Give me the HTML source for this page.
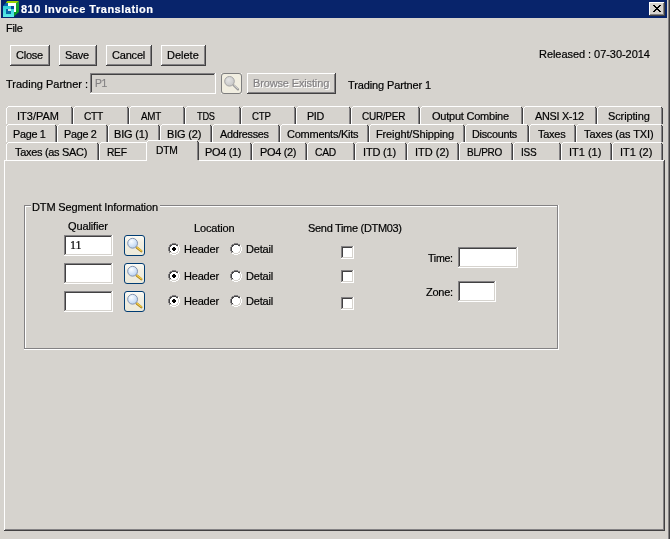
<!DOCTYPE html>
<html><head><meta charset="utf-8"><title>810 Invoice Translation</title>
<style>
html,body{margin:0;padding:0}
body{width:670px;height:539px;background:#d6d3ce;position:relative;overflow:hidden;font-family:"Liberation Sans",sans-serif;font-size:11px;line-height:13px;color:#000}
.a{position:absolute}
.t{position:absolute;white-space:nowrap;height:13px;-webkit-text-stroke:0.2px currentColor}
</style></head>
<body>
<div class="a" style="left:1px;top:0px;width:666px;height:18px;background:#08246b;"></div>
<div class="a" style="left:668px;top:0px;width:1px;height:539px;background:#848284;"></div>
<div class="a" style="left:669px;top:0px;width:1px;height:539px;background:#424142;"></div>
<div class="a" style="left:649px;top:2px;width:16px;height:14px;background:#d6d3ce;"></div>
<div class="a" style="left:649px;top:2px;width:15px;height:1px;background:#ffffff;"></div>
<div class="a" style="left:649px;top:2px;width:1px;height:13px;background:#ffffff;"></div>
<div class="a" style="left:649px;top:15px;width:16px;height:1px;background:#424142;"></div>
<div class="a" style="left:664px;top:2px;width:1px;height:14px;background:#424142;"></div>
<div class="a" style="left:650px;top:14px;width:14px;height:1px;background:#848284;"></div>
<div class="a" style="left:663px;top:3px;width:1px;height:12px;background:#848284;"></div>
<svg class="a" style="left:653px;top:5px" width="8" height="7" viewBox="0 0 8 7" shape-rendering="crispEdges"><path fill="#000" d="M0 0h2v1h-2zM6 0h2v1h-2zM1 1h2v1h-2zM5 1h2v1h-2zM2 2h4v1h-4zM3 3h2v1h-2zM2 4h4v1h-4zM1 5h2v1h-2zM5 5h2v1h-2zM0 6h2v1h-2zM6 6h2v1h-2z"/></svg>
<svg class="a" style="left:3px;top:1px" width="16" height="16" viewBox="0 0 16 16">
<defs><linearGradient id="cy" x1="0" y1="0" x2="0" y2="1"><stop offset="0" stop-color="#30ccd4"/><stop offset="1" stop-color="#5cece8"/></linearGradient>
<linearGradient id="gr" x1="0" y1="0" x2="0" y2="1"><stop offset="0" stop-color="#20a838"/><stop offset="1" stop-color="#089820"/></linearGradient></defs>
<polygon points="4.2,0 16,0 14,2 2.8,2" fill="#9cd400"/>
<polygon points="13,2 14,2 16,0 16,11 11,15.2 11,11 13,11" fill="url(#gr)"/>
<polygon points="2.8,2 5,2 5,5 0,5" fill="#0868b0"/>
<rect x="5" y="2" width="8" height="9" fill="#ffffff"/>
<rect x="0" y="5" width="11" height="11" fill="url(#cy)"/>
<rect x="8" y="5" width="3" height="3" fill="#08509c"/>
<rect x="3" y="8" width="5" height="5" fill="#0868a8"/>
<rect x="5" y="8.2" width="3" height="1.6" fill="#ffffff"/>
</svg>
<div class="a" style="left:10px;top:45px;width:40px;height:21px;background:#d6d3ce;"></div>
<div class="a" style="left:10px;top:45px;width:39px;height:1px;background:#ffffff;"></div>
<div class="a" style="left:10px;top:45px;width:1px;height:20px;background:#ffffff;"></div>
<div class="a" style="left:10px;top:65px;width:40px;height:1px;background:#424142;"></div>
<div class="a" style="left:49px;top:45px;width:1px;height:21px;background:#424142;"></div>
<div class="a" style="left:11px;top:64px;width:38px;height:1px;background:#848284;"></div>
<div class="a" style="left:48px;top:46px;width:1px;height:19px;background:#848284;"></div>
<div class="a" style="left:59px;top:45px;width:38px;height:21px;background:#d6d3ce;"></div>
<div class="a" style="left:59px;top:45px;width:37px;height:1px;background:#ffffff;"></div>
<div class="a" style="left:59px;top:45px;width:1px;height:20px;background:#ffffff;"></div>
<div class="a" style="left:59px;top:65px;width:38px;height:1px;background:#424142;"></div>
<div class="a" style="left:96px;top:45px;width:1px;height:21px;background:#424142;"></div>
<div class="a" style="left:60px;top:64px;width:36px;height:1px;background:#848284;"></div>
<div class="a" style="left:95px;top:46px;width:1px;height:19px;background:#848284;"></div>
<div class="a" style="left:106px;top:45px;width:46px;height:21px;background:#d6d3ce;"></div>
<div class="a" style="left:106px;top:45px;width:45px;height:1px;background:#ffffff;"></div>
<div class="a" style="left:106px;top:45px;width:1px;height:20px;background:#ffffff;"></div>
<div class="a" style="left:106px;top:65px;width:46px;height:1px;background:#424142;"></div>
<div class="a" style="left:151px;top:45px;width:1px;height:21px;background:#424142;"></div>
<div class="a" style="left:107px;top:64px;width:44px;height:1px;background:#848284;"></div>
<div class="a" style="left:150px;top:46px;width:1px;height:19px;background:#848284;"></div>
<div class="a" style="left:161px;top:45px;width:45px;height:21px;background:#d6d3ce;"></div>
<div class="a" style="left:161px;top:45px;width:44px;height:1px;background:#ffffff;"></div>
<div class="a" style="left:161px;top:45px;width:1px;height:20px;background:#ffffff;"></div>
<div class="a" style="left:161px;top:65px;width:45px;height:1px;background:#424142;"></div>
<div class="a" style="left:205px;top:45px;width:1px;height:21px;background:#424142;"></div>
<div class="a" style="left:162px;top:64px;width:43px;height:1px;background:#848284;"></div>
<div class="a" style="left:204px;top:46px;width:1px;height:19px;background:#848284;"></div>
<div class="a" style="left:90px;top:73px;width:126px;height:21px;background:#d6d3ce;"></div>
<div class="a" style="left:90px;top:73px;width:125px;height:1px;background:#848284;"></div>
<div class="a" style="left:90px;top:73px;width:1px;height:20px;background:#848284;"></div>
<div class="a" style="left:91px;top:74px;width:123px;height:1px;background:#424142;"></div>
<div class="a" style="left:91px;top:74px;width:1px;height:18px;background:#424142;"></div>
<div class="a" style="left:90px;top:93px;width:126px;height:1px;background:#ffffff;"></div>
<div class="a" style="left:215px;top:73px;width:1px;height:21px;background:#ffffff;"></div>
<div class="a" style="left:91px;top:92px;width:124px;height:1px;background:#d6d3ce;"></div>
<div class="a" style="left:214px;top:74px;width:1px;height:19px;background:#d6d3ce;"></div>
<svg class="a" style="left:0;top:0" width="0" height="0"><defs><radialGradient id="lg1" cx="0.38" cy="0.32" r="0.75"><stop offset="0" stop-color="#fafdff"/><stop offset="0.45" stop-color="#dceafa"/><stop offset="1" stop-color="#b4cef0"/></radialGradient><radialGradient id="lg0" cx="0.4" cy="0.35" r="0.75"><stop offset="0" stop-color="#e4e4e4"/><stop offset="1" stop-color="#c4c4c4"/></radialGradient></defs></svg>
<div class="a" style="left:221px;top:73px;width:19px;height:19px;border:1px solid #7e7e7e;border-radius:3px;background:#f1eee1"></div>
<div class="a" style="left:221px;top:73px;width:1px;height:1px;background:#f4f3ee;"></div>
<div class="a" style="left:241px;top:73px;width:1px;height:1px;background:#f4f3ee;"></div>
<div class="a" style="left:221px;top:93px;width:1px;height:1px;background:#f4f3ee;"></div>
<div class="a" style="left:241px;top:93px;width:1px;height:1px;background:#f4f3ee;"></div>
<svg class="a" style="left:221px;top:73px" width="21" height="21" viewBox="0 0 21 21"><line x1="12.6" y1="12.3" x2="17" y2="16.4" stroke="#9c9c9c" stroke-width="2.2" stroke-linecap="round"/><line x1="12.9" y1="12.1" x2="17" y2="15.9" stroke="#dcdcdc" stroke-width="0.8"/><circle cx="8.5" cy="8.3" r="4.8" fill="url(#lg0)" stroke="#a4a4a4" stroke-width="1"/></svg>
<div class="a" style="left:247px;top:73px;width:89px;height:21px;background:#d6d3ce;"></div>
<div class="a" style="left:247px;top:73px;width:88px;height:1px;background:#ffffff;"></div>
<div class="a" style="left:247px;top:73px;width:1px;height:20px;background:#ffffff;"></div>
<div class="a" style="left:247px;top:93px;width:89px;height:1px;background:#424142;"></div>
<div class="a" style="left:335px;top:73px;width:1px;height:21px;background:#424142;"></div>
<div class="a" style="left:248px;top:92px;width:87px;height:1px;background:#848284;"></div>
<div class="a" style="left:334px;top:74px;width:1px;height:19px;background:#848284;"></div>
<div class="a" style="left:4px;top:160px;width:660px;height:1px;background:#ffffff;"></div>
<div class="a" style="left:4px;top:160px;width:1px;height:370px;background:#ffffff;"></div>
<div class="a" style="left:4px;top:530px;width:661px;height:1px;background:#424142;"></div>
<div class="a" style="left:664px;top:160px;width:1px;height:371px;background:#424142;"></div>
<div class="a" style="left:5px;top:529px;width:659px;height:1px;background:#848284;"></div>
<div class="a" style="left:663px;top:161px;width:1px;height:369px;background:#848284;"></div>
<div class="a" style="left:6px;top:108px;width:1px;height:16px;background:#ffffff;"></div>
<div class="a" style="left:7px;top:107px;width:1px;height:1px;background:#ffffff;"></div>
<div class="a" style="left:8px;top:106px;width:63px;height:1px;background:#ffffff;"></div>
<div class="a" style="left:71px;top:107px;width:1px;height:1px;background:#424142;"></div>
<div class="a" style="left:72px;top:108px;width:1px;height:16px;background:#424142;"></div>
<div class="a" style="left:71px;top:108px;width:1px;height:16px;background:#848284;"></div>
<div class="a" style="left:73px;top:108px;width:1px;height:16px;background:#ffffff;"></div>
<div class="a" style="left:74px;top:107px;width:1px;height:1px;background:#ffffff;"></div>
<div class="a" style="left:75px;top:106px;width:52px;height:1px;background:#ffffff;"></div>
<div class="a" style="left:127px;top:107px;width:1px;height:1px;background:#424142;"></div>
<div class="a" style="left:128px;top:108px;width:1px;height:16px;background:#424142;"></div>
<div class="a" style="left:127px;top:108px;width:1px;height:16px;background:#848284;"></div>
<div class="a" style="left:129px;top:108px;width:1px;height:16px;background:#ffffff;"></div>
<div class="a" style="left:130px;top:107px;width:1px;height:1px;background:#ffffff;"></div>
<div class="a" style="left:131px;top:106px;width:52px;height:1px;background:#ffffff;"></div>
<div class="a" style="left:183px;top:107px;width:1px;height:1px;background:#424142;"></div>
<div class="a" style="left:184px;top:108px;width:1px;height:16px;background:#424142;"></div>
<div class="a" style="left:183px;top:108px;width:1px;height:16px;background:#848284;"></div>
<div class="a" style="left:185px;top:108px;width:1px;height:16px;background:#ffffff;"></div>
<div class="a" style="left:186px;top:107px;width:1px;height:1px;background:#ffffff;"></div>
<div class="a" style="left:187px;top:106px;width:52px;height:1px;background:#ffffff;"></div>
<div class="a" style="left:239px;top:107px;width:1px;height:1px;background:#424142;"></div>
<div class="a" style="left:240px;top:108px;width:1px;height:16px;background:#424142;"></div>
<div class="a" style="left:239px;top:108px;width:1px;height:16px;background:#848284;"></div>
<div class="a" style="left:241px;top:108px;width:1px;height:16px;background:#ffffff;"></div>
<div class="a" style="left:242px;top:107px;width:1px;height:1px;background:#ffffff;"></div>
<div class="a" style="left:243px;top:106px;width:51px;height:1px;background:#ffffff;"></div>
<div class="a" style="left:294px;top:107px;width:1px;height:1px;background:#424142;"></div>
<div class="a" style="left:295px;top:108px;width:1px;height:16px;background:#424142;"></div>
<div class="a" style="left:294px;top:108px;width:1px;height:16px;background:#848284;"></div>
<div class="a" style="left:296px;top:108px;width:1px;height:16px;background:#ffffff;"></div>
<div class="a" style="left:297px;top:107px;width:1px;height:1px;background:#ffffff;"></div>
<div class="a" style="left:298px;top:106px;width:51px;height:1px;background:#ffffff;"></div>
<div class="a" style="left:349px;top:107px;width:1px;height:1px;background:#424142;"></div>
<div class="a" style="left:350px;top:108px;width:1px;height:16px;background:#424142;"></div>
<div class="a" style="left:349px;top:108px;width:1px;height:16px;background:#848284;"></div>
<div class="a" style="left:351px;top:108px;width:1px;height:16px;background:#ffffff;"></div>
<div class="a" style="left:352px;top:107px;width:1px;height:1px;background:#ffffff;"></div>
<div class="a" style="left:353px;top:106px;width:65px;height:1px;background:#ffffff;"></div>
<div class="a" style="left:418px;top:107px;width:1px;height:1px;background:#424142;"></div>
<div class="a" style="left:419px;top:108px;width:1px;height:16px;background:#424142;"></div>
<div class="a" style="left:418px;top:108px;width:1px;height:16px;background:#848284;"></div>
<div class="a" style="left:420px;top:108px;width:1px;height:16px;background:#ffffff;"></div>
<div class="a" style="left:421px;top:107px;width:1px;height:1px;background:#ffffff;"></div>
<div class="a" style="left:422px;top:106px;width:99px;height:1px;background:#ffffff;"></div>
<div class="a" style="left:521px;top:107px;width:1px;height:1px;background:#424142;"></div>
<div class="a" style="left:522px;top:108px;width:1px;height:16px;background:#424142;"></div>
<div class="a" style="left:521px;top:108px;width:1px;height:16px;background:#848284;"></div>
<div class="a" style="left:523px;top:108px;width:1px;height:16px;background:#ffffff;"></div>
<div class="a" style="left:524px;top:107px;width:1px;height:1px;background:#ffffff;"></div>
<div class="a" style="left:525px;top:106px;width:70px;height:1px;background:#ffffff;"></div>
<div class="a" style="left:595px;top:107px;width:1px;height:1px;background:#424142;"></div>
<div class="a" style="left:596px;top:108px;width:1px;height:16px;background:#424142;"></div>
<div class="a" style="left:595px;top:108px;width:1px;height:16px;background:#848284;"></div>
<div class="a" style="left:597px;top:108px;width:1px;height:16px;background:#ffffff;"></div>
<div class="a" style="left:598px;top:107px;width:1px;height:1px;background:#ffffff;"></div>
<div class="a" style="left:599px;top:106px;width:62px;height:1px;background:#ffffff;"></div>
<div class="a" style="left:661px;top:107px;width:1px;height:1px;background:#424142;"></div>
<div class="a" style="left:662px;top:108px;width:1px;height:16px;background:#424142;"></div>
<div class="a" style="left:661px;top:108px;width:1px;height:16px;background:#848284;"></div>
<div class="a" style="left:6px;top:126px;width:1px;height:16px;background:#ffffff;"></div>
<div class="a" style="left:7px;top:125px;width:1px;height:1px;background:#ffffff;"></div>
<div class="a" style="left:8px;top:124px;width:47px;height:1px;background:#ffffff;"></div>
<div class="a" style="left:55px;top:125px;width:1px;height:1px;background:#424142;"></div>
<div class="a" style="left:56px;top:126px;width:1px;height:16px;background:#424142;"></div>
<div class="a" style="left:55px;top:126px;width:1px;height:16px;background:#848284;"></div>
<div class="a" style="left:57px;top:126px;width:1px;height:16px;background:#ffffff;"></div>
<div class="a" style="left:58px;top:125px;width:1px;height:1px;background:#ffffff;"></div>
<div class="a" style="left:59px;top:124px;width:47px;height:1px;background:#ffffff;"></div>
<div class="a" style="left:106px;top:125px;width:1px;height:1px;background:#424142;"></div>
<div class="a" style="left:107px;top:126px;width:1px;height:16px;background:#424142;"></div>
<div class="a" style="left:106px;top:126px;width:1px;height:16px;background:#848284;"></div>
<div class="a" style="left:108px;top:126px;width:1px;height:16px;background:#ffffff;"></div>
<div class="a" style="left:109px;top:125px;width:1px;height:1px;background:#ffffff;"></div>
<div class="a" style="left:110px;top:124px;width:48px;height:1px;background:#ffffff;"></div>
<div class="a" style="left:158px;top:125px;width:1px;height:1px;background:#424142;"></div>
<div class="a" style="left:159px;top:126px;width:1px;height:16px;background:#424142;"></div>
<div class="a" style="left:158px;top:126px;width:1px;height:16px;background:#848284;"></div>
<div class="a" style="left:160px;top:126px;width:1px;height:16px;background:#ffffff;"></div>
<div class="a" style="left:161px;top:125px;width:1px;height:1px;background:#ffffff;"></div>
<div class="a" style="left:162px;top:124px;width:48px;height:1px;background:#ffffff;"></div>
<div class="a" style="left:210px;top:125px;width:1px;height:1px;background:#424142;"></div>
<div class="a" style="left:211px;top:126px;width:1px;height:16px;background:#424142;"></div>
<div class="a" style="left:210px;top:126px;width:1px;height:16px;background:#848284;"></div>
<div class="a" style="left:212px;top:126px;width:1px;height:16px;background:#ffffff;"></div>
<div class="a" style="left:213px;top:125px;width:1px;height:1px;background:#ffffff;"></div>
<div class="a" style="left:214px;top:124px;width:64px;height:1px;background:#ffffff;"></div>
<div class="a" style="left:278px;top:125px;width:1px;height:1px;background:#424142;"></div>
<div class="a" style="left:279px;top:126px;width:1px;height:16px;background:#424142;"></div>
<div class="a" style="left:278px;top:126px;width:1px;height:16px;background:#848284;"></div>
<div class="a" style="left:280px;top:126px;width:1px;height:16px;background:#ffffff;"></div>
<div class="a" style="left:281px;top:125px;width:1px;height:1px;background:#ffffff;"></div>
<div class="a" style="left:282px;top:124px;width:85px;height:1px;background:#ffffff;"></div>
<div class="a" style="left:367px;top:125px;width:1px;height:1px;background:#424142;"></div>
<div class="a" style="left:368px;top:126px;width:1px;height:16px;background:#424142;"></div>
<div class="a" style="left:367px;top:126px;width:1px;height:16px;background:#848284;"></div>
<div class="a" style="left:369px;top:126px;width:1px;height:16px;background:#ffffff;"></div>
<div class="a" style="left:370px;top:125px;width:1px;height:1px;background:#ffffff;"></div>
<div class="a" style="left:371px;top:124px;width:92px;height:1px;background:#ffffff;"></div>
<div class="a" style="left:463px;top:125px;width:1px;height:1px;background:#424142;"></div>
<div class="a" style="left:464px;top:126px;width:1px;height:16px;background:#424142;"></div>
<div class="a" style="left:463px;top:126px;width:1px;height:16px;background:#848284;"></div>
<div class="a" style="left:465px;top:126px;width:1px;height:16px;background:#ffffff;"></div>
<div class="a" style="left:466px;top:125px;width:1px;height:1px;background:#ffffff;"></div>
<div class="a" style="left:467px;top:124px;width:60px;height:1px;background:#ffffff;"></div>
<div class="a" style="left:527px;top:125px;width:1px;height:1px;background:#424142;"></div>
<div class="a" style="left:528px;top:126px;width:1px;height:16px;background:#424142;"></div>
<div class="a" style="left:527px;top:126px;width:1px;height:16px;background:#848284;"></div>
<div class="a" style="left:529px;top:126px;width:1px;height:16px;background:#ffffff;"></div>
<div class="a" style="left:530px;top:125px;width:1px;height:1px;background:#ffffff;"></div>
<div class="a" style="left:531px;top:124px;width:43px;height:1px;background:#ffffff;"></div>
<div class="a" style="left:574px;top:125px;width:1px;height:1px;background:#424142;"></div>
<div class="a" style="left:575px;top:126px;width:1px;height:16px;background:#424142;"></div>
<div class="a" style="left:574px;top:126px;width:1px;height:16px;background:#848284;"></div>
<div class="a" style="left:576px;top:126px;width:1px;height:16px;background:#ffffff;"></div>
<div class="a" style="left:577px;top:125px;width:1px;height:1px;background:#ffffff;"></div>
<div class="a" style="left:578px;top:124px;width:83px;height:1px;background:#ffffff;"></div>
<div class="a" style="left:661px;top:125px;width:1px;height:1px;background:#424142;"></div>
<div class="a" style="left:662px;top:126px;width:1px;height:16px;background:#424142;"></div>
<div class="a" style="left:661px;top:126px;width:1px;height:16px;background:#848284;"></div>
<div class="a" style="left:6px;top:144px;width:1px;height:16px;background:#ffffff;"></div>
<div class="a" style="left:7px;top:143px;width:1px;height:1px;background:#ffffff;"></div>
<div class="a" style="left:8px;top:142px;width:89px;height:1px;background:#ffffff;"></div>
<div class="a" style="left:97px;top:143px;width:1px;height:1px;background:#424142;"></div>
<div class="a" style="left:98px;top:144px;width:1px;height:16px;background:#424142;"></div>
<div class="a" style="left:97px;top:144px;width:1px;height:16px;background:#848284;"></div>
<div class="a" style="left:99px;top:144px;width:1px;height:16px;background:#ffffff;"></div>
<div class="a" style="left:100px;top:143px;width:1px;height:1px;background:#ffffff;"></div>
<div class="a" style="left:101px;top:142px;width:45px;height:1px;background:#ffffff;"></div>
<div class="a" style="left:146px;top:143px;width:1px;height:1px;background:#424142;"></div>
<div class="a" style="left:147px;top:144px;width:1px;height:16px;background:#424142;"></div>
<div class="a" style="left:146px;top:144px;width:1px;height:16px;background:#848284;"></div>
<div class="a" style="left:197px;top:144px;width:1px;height:16px;background:#ffffff;"></div>
<div class="a" style="left:198px;top:143px;width:1px;height:1px;background:#ffffff;"></div>
<div class="a" style="left:199px;top:142px;width:51px;height:1px;background:#ffffff;"></div>
<div class="a" style="left:250px;top:143px;width:1px;height:1px;background:#424142;"></div>
<div class="a" style="left:251px;top:144px;width:1px;height:16px;background:#424142;"></div>
<div class="a" style="left:250px;top:144px;width:1px;height:16px;background:#848284;"></div>
<div class="a" style="left:252px;top:144px;width:1px;height:16px;background:#ffffff;"></div>
<div class="a" style="left:253px;top:143px;width:1px;height:1px;background:#ffffff;"></div>
<div class="a" style="left:254px;top:142px;width:51px;height:1px;background:#ffffff;"></div>
<div class="a" style="left:305px;top:143px;width:1px;height:1px;background:#424142;"></div>
<div class="a" style="left:306px;top:144px;width:1px;height:16px;background:#424142;"></div>
<div class="a" style="left:305px;top:144px;width:1px;height:16px;background:#848284;"></div>
<div class="a" style="left:307px;top:144px;width:1px;height:16px;background:#ffffff;"></div>
<div class="a" style="left:308px;top:143px;width:1px;height:1px;background:#ffffff;"></div>
<div class="a" style="left:309px;top:142px;width:44px;height:1px;background:#ffffff;"></div>
<div class="a" style="left:353px;top:143px;width:1px;height:1px;background:#424142;"></div>
<div class="a" style="left:354px;top:144px;width:1px;height:16px;background:#424142;"></div>
<div class="a" style="left:353px;top:144px;width:1px;height:16px;background:#848284;"></div>
<div class="a" style="left:355px;top:144px;width:1px;height:16px;background:#ffffff;"></div>
<div class="a" style="left:356px;top:143px;width:1px;height:1px;background:#ffffff;"></div>
<div class="a" style="left:357px;top:142px;width:48px;height:1px;background:#ffffff;"></div>
<div class="a" style="left:405px;top:143px;width:1px;height:1px;background:#424142;"></div>
<div class="a" style="left:406px;top:144px;width:1px;height:16px;background:#424142;"></div>
<div class="a" style="left:405px;top:144px;width:1px;height:16px;background:#848284;"></div>
<div class="a" style="left:407px;top:144px;width:1px;height:16px;background:#ffffff;"></div>
<div class="a" style="left:408px;top:143px;width:1px;height:1px;background:#ffffff;"></div>
<div class="a" style="left:409px;top:142px;width:48px;height:1px;background:#ffffff;"></div>
<div class="a" style="left:457px;top:143px;width:1px;height:1px;background:#424142;"></div>
<div class="a" style="left:458px;top:144px;width:1px;height:16px;background:#424142;"></div>
<div class="a" style="left:457px;top:144px;width:1px;height:16px;background:#848284;"></div>
<div class="a" style="left:459px;top:144px;width:1px;height:16px;background:#ffffff;"></div>
<div class="a" style="left:460px;top:143px;width:1px;height:1px;background:#ffffff;"></div>
<div class="a" style="left:461px;top:142px;width:50px;height:1px;background:#ffffff;"></div>
<div class="a" style="left:511px;top:143px;width:1px;height:1px;background:#424142;"></div>
<div class="a" style="left:512px;top:144px;width:1px;height:16px;background:#424142;"></div>
<div class="a" style="left:511px;top:144px;width:1px;height:16px;background:#848284;"></div>
<div class="a" style="left:513px;top:144px;width:1px;height:16px;background:#ffffff;"></div>
<div class="a" style="left:514px;top:143px;width:1px;height:1px;background:#ffffff;"></div>
<div class="a" style="left:515px;top:142px;width:44px;height:1px;background:#ffffff;"></div>
<div class="a" style="left:559px;top:143px;width:1px;height:1px;background:#424142;"></div>
<div class="a" style="left:560px;top:144px;width:1px;height:16px;background:#424142;"></div>
<div class="a" style="left:559px;top:144px;width:1px;height:16px;background:#848284;"></div>
<div class="a" style="left:561px;top:144px;width:1px;height:16px;background:#ffffff;"></div>
<div class="a" style="left:562px;top:143px;width:1px;height:1px;background:#ffffff;"></div>
<div class="a" style="left:563px;top:142px;width:47px;height:1px;background:#ffffff;"></div>
<div class="a" style="left:610px;top:143px;width:1px;height:1px;background:#424142;"></div>
<div class="a" style="left:611px;top:144px;width:1px;height:16px;background:#424142;"></div>
<div class="a" style="left:610px;top:144px;width:1px;height:16px;background:#848284;"></div>
<div class="a" style="left:612px;top:144px;width:1px;height:16px;background:#ffffff;"></div>
<div class="a" style="left:613px;top:143px;width:1px;height:1px;background:#ffffff;"></div>
<div class="a" style="left:614px;top:142px;width:47px;height:1px;background:#ffffff;"></div>
<div class="a" style="left:661px;top:143px;width:1px;height:1px;background:#424142;"></div>
<div class="a" style="left:662px;top:144px;width:1px;height:16px;background:#424142;"></div>
<div class="a" style="left:661px;top:144px;width:1px;height:16px;background:#848284;"></div>
<div class="a" style="left:146px;top:140px;width:53px;height:21px;background:#d6d3ce;"></div>
<div class="a" style="left:146px;top:142px;width:1px;height:19px;background:#ffffff;"></div>
<div class="a" style="left:147px;top:141px;width:1px;height:1px;background:#ffffff;"></div>
<div class="a" style="left:148px;top:140px;width:49px;height:1px;background:#ffffff;"></div>
<div class="a" style="left:197px;top:141px;width:1px;height:1px;background:#424142;"></div>
<div class="a" style="left:198px;top:142px;width:1px;height:18px;background:#424142;"></div>
<div class="a" style="left:197px;top:142px;width:1px;height:18px;background:#848284;"></div>
<div class="a" style="left:25px;top:206px;width:534px;height:1px;background:#ffffff;"></div>
<div class="a" style="left:25px;top:206px;width:1px;height:144px;background:#ffffff;"></div>
<div class="a" style="left:24px;top:349px;width:535px;height:1px;background:#ffffff;"></div>
<div class="a" style="left:558px;top:205px;width:1px;height:145px;background:#ffffff;"></div>
<div class="a" style="left:24px;top:205px;width:534px;height:1px;background:#848284;"></div>
<div class="a" style="left:24px;top:205px;width:1px;height:144px;background:#848284;"></div>
<div class="a" style="left:24px;top:348px;width:534px;height:1px;background:#848284;"></div>
<div class="a" style="left:557px;top:205px;width:1px;height:144px;background:#848284;"></div>
<div class="a" style="left:31px;top:205px;width:129px;height:2px;background:#d6d3ce;"></div>
<div class="a" style="left:64px;top:235px;width:49px;height:21px;background:#ffffff;"></div>
<div class="a" style="left:64px;top:235px;width:48px;height:1px;background:#848284;"></div>
<div class="a" style="left:64px;top:235px;width:1px;height:20px;background:#848284;"></div>
<div class="a" style="left:65px;top:236px;width:46px;height:1px;background:#424142;"></div>
<div class="a" style="left:65px;top:236px;width:1px;height:18px;background:#424142;"></div>
<div class="a" style="left:64px;top:255px;width:49px;height:1px;background:#ffffff;"></div>
<div class="a" style="left:112px;top:235px;width:1px;height:21px;background:#ffffff;"></div>
<div class="a" style="left:65px;top:254px;width:47px;height:1px;background:#d6d3ce;"></div>
<div class="a" style="left:111px;top:236px;width:1px;height:19px;background:#d6d3ce;"></div>
<div class="a" style="left:124px;top:235px;width:19px;height:19px;border:1px solid #003c73;border-radius:3px;background:linear-gradient(#fbfaf5,#f1eee2 35%,#ece9da)"></div>
<svg class="a" style="left:124px;top:235px" width="21" height="21" viewBox="0 0 21 21"><line x1="12.7" y1="12.5" x2="17.3" y2="16.2" stroke="#a88020" stroke-width="2.3" stroke-linecap="round"/><line x1="12.9" y1="12.2" x2="17.3" y2="15.8" stroke="#f4d048" stroke-width="1.1" stroke-linecap="round"/><circle cx="8.6" cy="8.25" r="4.9" fill="url(#lg1)" stroke="#8494b0" stroke-width="1"/></svg>
<div class="a" style="left:64px;top:263px;width:49px;height:21px;background:#ffffff;"></div>
<div class="a" style="left:64px;top:263px;width:48px;height:1px;background:#848284;"></div>
<div class="a" style="left:64px;top:263px;width:1px;height:20px;background:#848284;"></div>
<div class="a" style="left:65px;top:264px;width:46px;height:1px;background:#424142;"></div>
<div class="a" style="left:65px;top:264px;width:1px;height:18px;background:#424142;"></div>
<div class="a" style="left:64px;top:283px;width:49px;height:1px;background:#ffffff;"></div>
<div class="a" style="left:112px;top:263px;width:1px;height:21px;background:#ffffff;"></div>
<div class="a" style="left:65px;top:282px;width:47px;height:1px;background:#d6d3ce;"></div>
<div class="a" style="left:111px;top:264px;width:1px;height:19px;background:#d6d3ce;"></div>
<div class="a" style="left:124px;top:263px;width:19px;height:19px;border:1px solid #003c73;border-radius:3px;background:linear-gradient(#fbfaf5,#f1eee2 35%,#ece9da)"></div>
<svg class="a" style="left:124px;top:263px" width="21" height="21" viewBox="0 0 21 21"><line x1="12.7" y1="12.5" x2="17.3" y2="16.2" stroke="#a88020" stroke-width="2.3" stroke-linecap="round"/><line x1="12.9" y1="12.2" x2="17.3" y2="15.8" stroke="#f4d048" stroke-width="1.1" stroke-linecap="round"/><circle cx="8.6" cy="8.25" r="4.9" fill="url(#lg1)" stroke="#8494b0" stroke-width="1"/></svg>
<div class="a" style="left:64px;top:291px;width:49px;height:21px;background:#ffffff;"></div>
<div class="a" style="left:64px;top:291px;width:48px;height:1px;background:#848284;"></div>
<div class="a" style="left:64px;top:291px;width:1px;height:20px;background:#848284;"></div>
<div class="a" style="left:65px;top:292px;width:46px;height:1px;background:#424142;"></div>
<div class="a" style="left:65px;top:292px;width:1px;height:18px;background:#424142;"></div>
<div class="a" style="left:64px;top:311px;width:49px;height:1px;background:#ffffff;"></div>
<div class="a" style="left:112px;top:291px;width:1px;height:21px;background:#ffffff;"></div>
<div class="a" style="left:65px;top:310px;width:47px;height:1px;background:#d6d3ce;"></div>
<div class="a" style="left:111px;top:292px;width:1px;height:19px;background:#d6d3ce;"></div>
<div class="a" style="left:124px;top:291px;width:19px;height:19px;border:1px solid #003c73;border-radius:3px;background:linear-gradient(#fbfaf5,#f1eee2 35%,#ece9da)"></div>
<svg class="a" style="left:124px;top:291px" width="21" height="21" viewBox="0 0 21 21"><line x1="12.7" y1="12.5" x2="17.3" y2="16.2" stroke="#a88020" stroke-width="2.3" stroke-linecap="round"/><line x1="12.9" y1="12.2" x2="17.3" y2="15.8" stroke="#f4d048" stroke-width="1.1" stroke-linecap="round"/><circle cx="8.6" cy="8.25" r="4.9" fill="url(#lg1)" stroke="#8494b0" stroke-width="1"/></svg>
<div class="a" style="left:458px;top:247px;width:60px;height:21px;background:#ffffff;"></div>
<div class="a" style="left:458px;top:247px;width:59px;height:1px;background:#848284;"></div>
<div class="a" style="left:458px;top:247px;width:1px;height:20px;background:#848284;"></div>
<div class="a" style="left:459px;top:248px;width:57px;height:1px;background:#424142;"></div>
<div class="a" style="left:459px;top:248px;width:1px;height:18px;background:#424142;"></div>
<div class="a" style="left:458px;top:267px;width:60px;height:1px;background:#ffffff;"></div>
<div class="a" style="left:517px;top:247px;width:1px;height:21px;background:#ffffff;"></div>
<div class="a" style="left:459px;top:266px;width:58px;height:1px;background:#d6d3ce;"></div>
<div class="a" style="left:516px;top:248px;width:1px;height:19px;background:#d6d3ce;"></div>
<div class="a" style="left:458px;top:281px;width:38px;height:21px;background:#ffffff;"></div>
<div class="a" style="left:458px;top:281px;width:37px;height:1px;background:#848284;"></div>
<div class="a" style="left:458px;top:281px;width:1px;height:20px;background:#848284;"></div>
<div class="a" style="left:459px;top:282px;width:35px;height:1px;background:#424142;"></div>
<div class="a" style="left:459px;top:282px;width:1px;height:18px;background:#424142;"></div>
<div class="a" style="left:458px;top:301px;width:38px;height:1px;background:#ffffff;"></div>
<div class="a" style="left:495px;top:281px;width:1px;height:21px;background:#ffffff;"></div>
<div class="a" style="left:459px;top:300px;width:36px;height:1px;background:#d6d3ce;"></div>
<div class="a" style="left:494px;top:282px;width:1px;height:19px;background:#d6d3ce;"></div>
<svg class="a" style="left:168px;top:243px" width="12" height="12" viewBox="0 0 12 12" shape-rendering="crispEdges">
<path fill="#fff" d="M4 2h4v1h2v1h1v4h-1v2h-2v1h-4v-1h-2v-2h-1v-4h1v-1h2z"/>
<path fill="#848284" d="M4 0h4v1h-4zM2 1h2v1h-2zM8 1h2v1h-2zM1 2h1v2h-1zM0 4h1v4h-1zM1 8h1v2h-1z"/>
<path fill="#424142" d="M4 1h4v1h-4zM2 2h2v1h-2zM8 2h2v1h-2zM2 3h1v1h-1zM1 4h1v4h-1zM2 8h1v1h-1z"/>
<path fill="#fff" d="M10 2h1v2h-1zM11 4h1v4h-1zM10 8h1v2h-1zM8 10h2v1h-2zM4 11h4v1h-4zM2 10h2v1h-2z"/>
<path fill="#d6d3ce" d="M9 3h1v1h-1zM10 4h1v4h-1zM9 8h1v1h-1zM8 9h2v1h-2zM4 10h4v1h-4zM2 9h2v1h-2z"/>
<rect x="4" y="5" width="4" height="2" fill="#000"/><rect x="5" y="4" width="2" height="4" fill="#000"/></svg>
<svg class="a" style="left:230px;top:243px" width="12" height="12" viewBox="0 0 12 12" shape-rendering="crispEdges">
<path fill="#fff" d="M4 2h4v1h2v1h1v4h-1v2h-2v1h-4v-1h-2v-2h-1v-4h1v-1h2z"/>
<path fill="#848284" d="M4 0h4v1h-4zM2 1h2v1h-2zM8 1h2v1h-2zM1 2h1v2h-1zM0 4h1v4h-1zM1 8h1v2h-1z"/>
<path fill="#424142" d="M4 1h4v1h-4zM2 2h2v1h-2zM8 2h2v1h-2zM2 3h1v1h-1zM1 4h1v4h-1zM2 8h1v1h-1z"/>
<path fill="#fff" d="M10 2h1v2h-1zM11 4h1v4h-1zM10 8h1v2h-1zM8 10h2v1h-2zM4 11h4v1h-4zM2 10h2v1h-2z"/>
<path fill="#d6d3ce" d="M9 3h1v1h-1zM10 4h1v4h-1zM9 8h1v1h-1zM8 9h2v1h-2zM4 10h4v1h-4zM2 9h2v1h-2z"/>
</svg>
<svg class="a" style="left:168px;top:270px" width="12" height="12" viewBox="0 0 12 12" shape-rendering="crispEdges">
<path fill="#fff" d="M4 2h4v1h2v1h1v4h-1v2h-2v1h-4v-1h-2v-2h-1v-4h1v-1h2z"/>
<path fill="#848284" d="M4 0h4v1h-4zM2 1h2v1h-2zM8 1h2v1h-2zM1 2h1v2h-1zM0 4h1v4h-1zM1 8h1v2h-1z"/>
<path fill="#424142" d="M4 1h4v1h-4zM2 2h2v1h-2zM8 2h2v1h-2zM2 3h1v1h-1zM1 4h1v4h-1zM2 8h1v1h-1z"/>
<path fill="#fff" d="M10 2h1v2h-1zM11 4h1v4h-1zM10 8h1v2h-1zM8 10h2v1h-2zM4 11h4v1h-4zM2 10h2v1h-2z"/>
<path fill="#d6d3ce" d="M9 3h1v1h-1zM10 4h1v4h-1zM9 8h1v1h-1zM8 9h2v1h-2zM4 10h4v1h-4zM2 9h2v1h-2z"/>
<rect x="4" y="5" width="4" height="2" fill="#000"/><rect x="5" y="4" width="2" height="4" fill="#000"/></svg>
<svg class="a" style="left:230px;top:270px" width="12" height="12" viewBox="0 0 12 12" shape-rendering="crispEdges">
<path fill="#fff" d="M4 2h4v1h2v1h1v4h-1v2h-2v1h-4v-1h-2v-2h-1v-4h1v-1h2z"/>
<path fill="#848284" d="M4 0h4v1h-4zM2 1h2v1h-2zM8 1h2v1h-2zM1 2h1v2h-1zM0 4h1v4h-1zM1 8h1v2h-1z"/>
<path fill="#424142" d="M4 1h4v1h-4zM2 2h2v1h-2zM8 2h2v1h-2zM2 3h1v1h-1zM1 4h1v4h-1zM2 8h1v1h-1z"/>
<path fill="#fff" d="M10 2h1v2h-1zM11 4h1v4h-1zM10 8h1v2h-1zM8 10h2v1h-2zM4 11h4v1h-4zM2 10h2v1h-2z"/>
<path fill="#d6d3ce" d="M9 3h1v1h-1zM10 4h1v4h-1zM9 8h1v1h-1zM8 9h2v1h-2zM4 10h4v1h-4zM2 9h2v1h-2z"/>
</svg>
<svg class="a" style="left:168px;top:295px" width="12" height="12" viewBox="0 0 12 12" shape-rendering="crispEdges">
<path fill="#fff" d="M4 2h4v1h2v1h1v4h-1v2h-2v1h-4v-1h-2v-2h-1v-4h1v-1h2z"/>
<path fill="#848284" d="M4 0h4v1h-4zM2 1h2v1h-2zM8 1h2v1h-2zM1 2h1v2h-1zM0 4h1v4h-1zM1 8h1v2h-1z"/>
<path fill="#424142" d="M4 1h4v1h-4zM2 2h2v1h-2zM8 2h2v1h-2zM2 3h1v1h-1zM1 4h1v4h-1zM2 8h1v1h-1z"/>
<path fill="#fff" d="M10 2h1v2h-1zM11 4h1v4h-1zM10 8h1v2h-1zM8 10h2v1h-2zM4 11h4v1h-4zM2 10h2v1h-2z"/>
<path fill="#d6d3ce" d="M9 3h1v1h-1zM10 4h1v4h-1zM9 8h1v1h-1zM8 9h2v1h-2zM4 10h4v1h-4zM2 9h2v1h-2z"/>
<rect x="4" y="5" width="4" height="2" fill="#000"/><rect x="5" y="4" width="2" height="4" fill="#000"/></svg>
<svg class="a" style="left:230px;top:295px" width="12" height="12" viewBox="0 0 12 12" shape-rendering="crispEdges">
<path fill="#fff" d="M4 2h4v1h2v1h1v4h-1v2h-2v1h-4v-1h-2v-2h-1v-4h1v-1h2z"/>
<path fill="#848284" d="M4 0h4v1h-4zM2 1h2v1h-2zM8 1h2v1h-2zM1 2h1v2h-1zM0 4h1v4h-1zM1 8h1v2h-1z"/>
<path fill="#424142" d="M4 1h4v1h-4zM2 2h2v1h-2zM8 2h2v1h-2zM2 3h1v1h-1zM1 4h1v4h-1zM2 8h1v1h-1z"/>
<path fill="#fff" d="M10 2h1v2h-1zM11 4h1v4h-1zM10 8h1v2h-1zM8 10h2v1h-2zM4 11h4v1h-4zM2 10h2v1h-2z"/>
<path fill="#d6d3ce" d="M9 3h1v1h-1zM10 4h1v4h-1zM9 8h1v1h-1zM8 9h2v1h-2zM4 10h4v1h-4zM2 9h2v1h-2z"/>
</svg>
<div class="a" style="left:341px;top:246px;width:13px;height:13px;background:#ffffff;"></div>
<div class="a" style="left:341px;top:246px;width:12px;height:1px;background:#848284;"></div>
<div class="a" style="left:341px;top:246px;width:1px;height:12px;background:#848284;"></div>
<div class="a" style="left:342px;top:247px;width:10px;height:1px;background:#424142;"></div>
<div class="a" style="left:342px;top:247px;width:1px;height:10px;background:#424142;"></div>
<div class="a" style="left:341px;top:258px;width:13px;height:1px;background:#ffffff;"></div>
<div class="a" style="left:353px;top:246px;width:1px;height:13px;background:#ffffff;"></div>
<div class="a" style="left:342px;top:257px;width:11px;height:1px;background:#d6d3ce;"></div>
<div class="a" style="left:352px;top:247px;width:1px;height:11px;background:#d6d3ce;"></div>
<div class="a" style="left:341px;top:270px;width:13px;height:13px;background:#ffffff;"></div>
<div class="a" style="left:341px;top:270px;width:12px;height:1px;background:#848284;"></div>
<div class="a" style="left:341px;top:270px;width:1px;height:12px;background:#848284;"></div>
<div class="a" style="left:342px;top:271px;width:10px;height:1px;background:#424142;"></div>
<div class="a" style="left:342px;top:271px;width:1px;height:10px;background:#424142;"></div>
<div class="a" style="left:341px;top:282px;width:13px;height:1px;background:#ffffff;"></div>
<div class="a" style="left:353px;top:270px;width:1px;height:13px;background:#ffffff;"></div>
<div class="a" style="left:342px;top:281px;width:11px;height:1px;background:#d6d3ce;"></div>
<div class="a" style="left:352px;top:271px;width:1px;height:11px;background:#d6d3ce;"></div>
<div class="a" style="left:341px;top:297px;width:13px;height:13px;background:#ffffff;"></div>
<div class="a" style="left:341px;top:297px;width:12px;height:1px;background:#848284;"></div>
<div class="a" style="left:341px;top:297px;width:1px;height:12px;background:#848284;"></div>
<div class="a" style="left:342px;top:298px;width:10px;height:1px;background:#424142;"></div>
<div class="a" style="left:342px;top:298px;width:1px;height:10px;background:#424142;"></div>
<div class="a" style="left:341px;top:309px;width:13px;height:1px;background:#ffffff;"></div>
<div class="a" style="left:353px;top:297px;width:1px;height:13px;background:#ffffff;"></div>
<div class="a" style="left:342px;top:308px;width:11px;height:1px;background:#d6d3ce;"></div>
<div class="a" style="left:352px;top:298px;width:1px;height:11px;background:#d6d3ce;"></div>
<div class="a" style="left:0;top:0;width:670px;height:539px;will-change:transform">
<span class="t" style="left:21.00px;top:3px;letter-spacing:0.500px;font-weight:bold;color:#fff">810 Invoice Translation</span>
<span class="t" style="left:6.01px;top:22px;letter-spacing:-0.300px;transform:scaleX(0.9934);transform-origin:0 0;">File</span>
<span class="t" style="left:16.00px;top:49px;letter-spacing:-0.250px;">Close</span>
<span class="t" style="left:65.00px;top:49px;letter-spacing:-0.300px;transform:scaleX(0.9957);transform-origin:0 0;">Save</span>
<span class="t" style="left:112.00px;top:49px;letter-spacing:-0.200px;">Cancel</span>
<span class="t" style="left:167.00px;top:49px;">Delete</span>
<span class="t" style="left:539.00px;top:48px;letter-spacing:-0.050px;">Released : 07-30-2014</span>
<span class="t" style="left:6.00px;top:78px;">Trading Partner :</span>
<span class="t" style="left:95.06px;top:77px;letter-spacing:-0.300px;transform:scaleX(0.9402);transform-origin:0 0;color:#848284">P1</span>
<span class="t" style="left:254.00px;top:78px;letter-spacing:-0.143px;color:#fff">Browse Existing</span>
<span class="t" style="left:253.00px;top:77px;letter-spacing:-0.143px;color:#848284">Browse Existing</span>
<span class="t" style="left:348.00px;top:79px;letter-spacing:-0.125px;">Trading Partner 1</span>
<span class="t" style="left:32.00px;top:201px;letter-spacing:-0.136px;">DTM Segment Information</span>
<span class="t" style="left:68.00px;top:220px;letter-spacing:-0.125px;">Qualifier</span>
<span class="t" style="left:70.00px;top:239px;font-size:12px;font-family:'Liberation Serif',serif;-webkit-text-stroke:0.2px #000">11</span>
<span class="t" style="left:194.00px;top:222px;letter-spacing:-0.143px;">Location</span>
<span class="t" style="left:184.00px;top:243px;letter-spacing:-0.200px;">Header</span>
<span class="t" style="left:246.00px;top:243px;letter-spacing:-0.200px;">Detail</span>
<span class="t" style="left:184.00px;top:270px;letter-spacing:-0.200px;">Header</span>
<span class="t" style="left:246.00px;top:270px;letter-spacing:-0.200px;">Detail</span>
<span class="t" style="left:184.00px;top:295px;letter-spacing:-0.200px;">Header</span>
<span class="t" style="left:246.00px;top:295px;letter-spacing:-0.200px;">Detail</span>
<span class="t" style="left:308.00px;top:222px;letter-spacing:-0.300px;transform:scaleX(0.9978);transform-origin:0 0;">Send Time (DTM03)</span>
<span class="t" style="left:428.00px;top:252px;letter-spacing:-0.300px;transform:scaleX(0.9677);transform-origin:0 0;">Time:</span>
<span class="t" style="left:426.00px;top:286px;letter-spacing:-0.250px;">Zone:</span>
<span class="t" style="left:17.00px;top:110px;">IT3/PAM</span>
<span class="t" style="left:84.07px;top:110px;letter-spacing:-0.300px;transform:scaleX(0.9278);transform-origin:0 0;">CTT</span>
<span class="t" style="left:141.00px;top:110px;letter-spacing:-0.300px;transform:scaleX(0.8929);transform-origin:0 0;">AMT</span>
<span class="t" style="left:197.00px;top:110px;letter-spacing:-0.300px;transform:scaleX(0.8411);transform-origin:0 0;">TDS</span>
<span class="t" style="left:252.12px;top:110px;letter-spacing:-0.300px;transform:scaleX(0.8824);transform-origin:0 0;">CTP</span>
<span class="t" style="left:307.02px;top:110px;letter-spacing:-0.300px;transform:scaleX(0.9756);transform-origin:0 0;">PID</span>
<span class="t" style="left:362.09px;top:110px;letter-spacing:-0.300px;transform:scaleX(0.9091);transform-origin:0 0;">CUR/PER</span>
<span class="t" style="left:432.00px;top:110px;letter-spacing:-0.231px;">Output Combine</span>
<span class="t" style="left:535.00px;top:110px;letter-spacing:-0.300px;transform:scaleX(0.9877);transform-origin:0 0;">ANSI X-12</span>
<span class="t" style="left:608.00px;top:110px;letter-spacing:-0.125px;">Scripting</span>
<span class="t" style="left:13.02px;top:128px;letter-spacing:-0.300px;transform:scaleX(0.9841);transform-origin:0 0;">Page 1</span>
<span class="t" style="left:64.02px;top:128px;letter-spacing:-0.300px;transform:scaleX(0.9841);transform-origin:0 0;">Page 2</span>
<span class="t" style="left:114.00px;top:128px;letter-spacing:-0.167px;">BIG (1)</span>
<span class="t" style="left:167.00px;top:128px;letter-spacing:-0.167px;">BIG (2)</span>
<span class="t" style="left:220.00px;top:128px;letter-spacing:-0.300px;transform:scaleX(0.9879);transform-origin:0 0;">Addresses</span>
<span class="t" style="left:287.00px;top:128px;letter-spacing:-0.250px;">Comments/Kits</span>
<span class="t" style="left:376.00px;top:128px;letter-spacing:-0.133px;">Freight/Shipping</span>
<span class="t" style="left:472.01px;top:128px;letter-spacing:-0.300px;transform:scaleX(0.9865);transform-origin:0 0;">Discounts</span>
<span class="t" style="left:538.00px;top:128px;letter-spacing:-0.250px;">Taxes</span>
<span class="t" style="left:584.00px;top:128px;letter-spacing:-0.077px;">Taxes (as TXI)</span>
<span class="t" style="left:15.00px;top:146px;letter-spacing:-0.300px;transform:scaleX(0.9986);transform-origin:0 0;">Taxes (as SAC)</span>
<span class="t" style="left:107.07px;top:146px;letter-spacing:-0.300px;transform:scaleX(0.9314);transform-origin:0 0;">REF</span>
<span class="t" style="left:156.07px;top:144px;letter-spacing:-0.300px;transform:scaleX(0.9346);transform-origin:0 0;">DTM</span>
<span class="t" style="left:205.01px;top:146px;letter-spacing:-0.300px;transform:scaleX(0.9943);transform-origin:0 0;">PO4 (1)</span>
<span class="t" style="left:260.01px;top:146px;letter-spacing:-0.300px;transform:scaleX(0.9943);transform-origin:0 0;">PO4 (2)</span>
<span class="t" style="left:315.07px;top:146px;letter-spacing:-0.300px;transform:scaleX(0.9346);transform-origin:0 0;">CAD</span>
<span class="t" style="left:363.00px;top:146px;letter-spacing:-0.167px;">ITD (1)</span>
<span class="t" style="left:415.00px;top:146px;">ITD (2)</span>
<span class="t" style="left:467.09px;top:146px;letter-spacing:-0.300px;transform:scaleX(0.9067);transform-origin:0 0;">BL/PRO</span>
<span class="t" style="left:521.09px;top:146px;letter-spacing:-0.300px;transform:scaleX(0.9146);transform-origin:0 0;">ISS</span>
<span class="t" style="left:569.00px;top:146px;">IT1 (1)</span>
<span class="t" style="left:620.00px;top:146px;">IT1 (2)</span>
</div>
</body></html>
